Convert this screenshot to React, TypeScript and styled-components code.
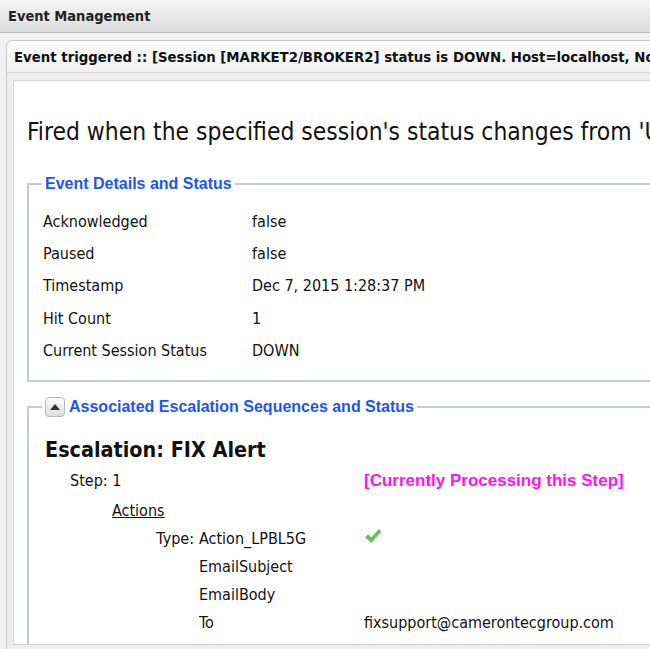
import React from "react";
import styled, { createGlobalStyle } from "styled-components";

const GlobalStyle = createGlobalStyle`
  html, body {
    margin: 0;
    padding: 0;
    background: #f0f0f0;
    overflow: hidden;
  }
  body {
    font-family: "DejaVu Sans Condensed", "DejaVu Sans", sans-serif;
    color: #111;
  }
`;

const Page = styled.div`
  width: 650px;
  height: 649px;
  overflow: hidden;
  display: flex;
  flex-direction: column;
`;

const TitleBar = styled.div`
  height: 32px;
  flex: none;
  display: flex;
  align-items: center;
  padding-left: 8px;
  background: linear-gradient(#f6f6f6, #dadada);
  border-bottom: 1px solid #bdbdbd;
  font-weight: bold;
  font-size: 14.5px;
  color: #222;
`;

const Main = styled.div`
  flex: 1;
  min-height: 0;
  padding: 7px 0 0 6px;
  display: flex;
`;

const Panel = styled.section`
  flex: 1;
  min-width: 0;
  display: flex;
  flex-direction: column;
  border: 1px solid #c9c9c9;
  border-right: none;
  border-bottom: none;
  border-radius: 6px 0 0 0;
  background: #eeeeee;
`;

const PanelHeader = styled.div`
  height: 31px;
  flex: none;
  display: flex;
  align-items: center;
  padding-left: 7px;
  background: linear-gradient(#fbfbfb, #f1f1f1);
  border-bottom: 1px solid #d4d4d4;
  border-radius: 6px 0 0 0;
  font-weight: bold;
  font-size: 14.8px;
  white-space: nowrap;
  overflow: hidden;
`;

const PanelBody = styled.div`
  flex: 1;
  min-height: 0;
  padding: 7px 0 4px 6px;
  display: flex;
`;

const Content = styled.div`
  flex: 1;
  min-width: 0;
  background: #fff;
  border: 1px solid #d6d6d6;
  border-right: none;
  border-bottom: 1px solid #cfcfcf;
  overflow: hidden;
  padding: 0 0 0 13px;
`;

const Inner = styled.div`
  width: 900px;
`;

const Description = styled.h1`
  margin: 36px 0 0;
  font-weight: normal;
  font-size: 24.4px;
  line-height: 30px;
  white-space: nowrap;
`;

const Group = styled.fieldset<{ $top: number }>`
  margin: ${p => p.$top}px 0 0;
  border: 2px solid #c6c9da;
  border-right: none;
  padding: 12px 0 14px 13px;
  min-width: 0;
`;

const Legend = styled.legend`
  margin-left: 0;
  padding: 0 3px;
  display: flex;
  align-items: center;
  gap: 4px;
  font-family: "Liberation Sans", Arial, sans-serif;
  font-weight: bold;
  font-size: 16px;
  line-height: 20px;
  color: #1d55f2;
`;

const ToggleButton = styled.button`
  width: 20px;
  height: 20px;
  padding: 0;
  display: flex;
  align-items: center;
  justify-content: center;
  border: 1px solid #b9b9b9;
  border-radius: 4px;
  background: linear-gradient(#ffffff, #dcdcdc);
`;

const DetailGrid = styled.div`
  display: grid;
  grid-template-columns: 209px auto;
  grid-auto-rows: 32.3px;
  align-items: center;
  margin-top: -1px;
  padding-left: 1px;
  font-size: 16px;
`;

const Escalation = styled.div`
  padding: 7px 0 0 3px;
`;

const EscTitle = styled.h2`
  margin: 0;
  font-size: 21.4px;
  line-height: 28px;
  font-weight: bold;
`;

const StepRow = styled.div`
  display: grid;
  grid-template-columns: 294px auto;
  align-items: center;
  height: 33px;
  padding-left: 25px;
  font-size: 16px;
`;

const CurrentStep = styled.span`
  font-family: "Liberation Sans", Arial, sans-serif;
  font-weight: bold;
  font-size: 17px;
  color: #ff14f0;
`;

const ActionsLabel = styled.div`
  padding-left: 67px;
  height: 27px;
  display: flex;
  align-items: center;
  font-size: 16px;
  text-decoration: underline;
`;

const ActionGrid = styled.div`
  display: grid;
  grid-template-columns: 87px 165px auto;
  grid-auto-rows: 28px;
  align-items: center;
  padding-left: 67px;
  font-size: 16px;
`;

const Key = styled.span<{ $right?: boolean }>`
  text-align: ${p => (p.$right ? "right" : "left")};
  padding-right: ${p => (p.$right ? "5px" : "0")};
`;

const details: [string, string][] = [
  ["Acknowledged", "false"],
  ["Paused", "false"],
  ["Timestamp", "Dec 7, 2015 1:28:37 PM"],
  ["Hit Count", "1"],
  ["Current Session Status", "DOWN"],
];

const Check = () => (
  <svg width="18" height="16" viewBox="0 0 18 16">
    <path
      d="M1.5 9.2 L4.2 6.8 L7.2 10 L14.8 1.5 L17 3.6 L7.3 14.5 Z"
      fill="#5cc94a"
      stroke="#4aa63b"
      strokeWidth="0.6"
      strokeLinejoin="round"
    />
  </svg>
);

const UpArrow = () => (
  <svg width="10" height="6" viewBox="0 0 10 6">
    <path d="M0 6 L5 0 L10 6 Z" fill="#333" />
  </svg>
);

const App: React.FC = () => {
  return (
    <Page>
      <GlobalStyle />
      <TitleBar>Event Management</TitleBar>
      <Main>
        <Panel>
          <PanelHeader>
            Event triggered :: [Session [MARKET2/BROKER2] status is DOWN. Host=localhost, Node=fixnode1]
          </PanelHeader>
          <PanelBody>
            <Content>
              <Inner>
                <Description>
                  Fired when the specified session's status changes from 'UP' to 'DOWN'.
                </Description>
                <Group $top={27}>
                  <Legend>Event Details and Status</Legend>
                  <DetailGrid>
                    {details.map(([k, v]) => (
                      <React.Fragment key={k}>
                        <span>{k}</span>
                        <span>{v}</span>
                      </React.Fragment>
                    ))}
                  </DetailGrid>
                </Group>
                <Group $top={15}>
                  <Legend>
                    <ToggleButton aria-label="collapse">
                      <UpArrow />
                    </ToggleButton>
                    Associated Escalation Sequences and Status
                  </Legend>
                  <Escalation>
                    <EscTitle>Escalation: FIX Alert</EscTitle>
                    <StepRow>
                      <span>Step: 1</span>
                      <CurrentStep>[Currently Processing this Step]</CurrentStep>
                    </StepRow>
                    <ActionsLabel>Actions</ActionsLabel>
                    <ActionGrid>
                      <Key $right>Type:</Key>
                      <span>Action_LPBL5G</span>
                      <span><Check /></span>
                      <span />
                      <span>EmailSubject</span>
                      <span />
                      <span />
                      <span>EmailBody</span>
                      <span />
                      <span />
                      <span>To</span>
                      <span>fixsupport@camerontecgroup.com</span>
                      <span />
                      <span>From</span>
                      <span>fixalerts@camerontecgroup.com</span>
                    </ActionGrid>
                  </Escalation>
                </Group>
              </Inner>
            </Content>
          </PanelBody>
        </Panel>
      </Main>
    </Page>
  );
};

export default App;
